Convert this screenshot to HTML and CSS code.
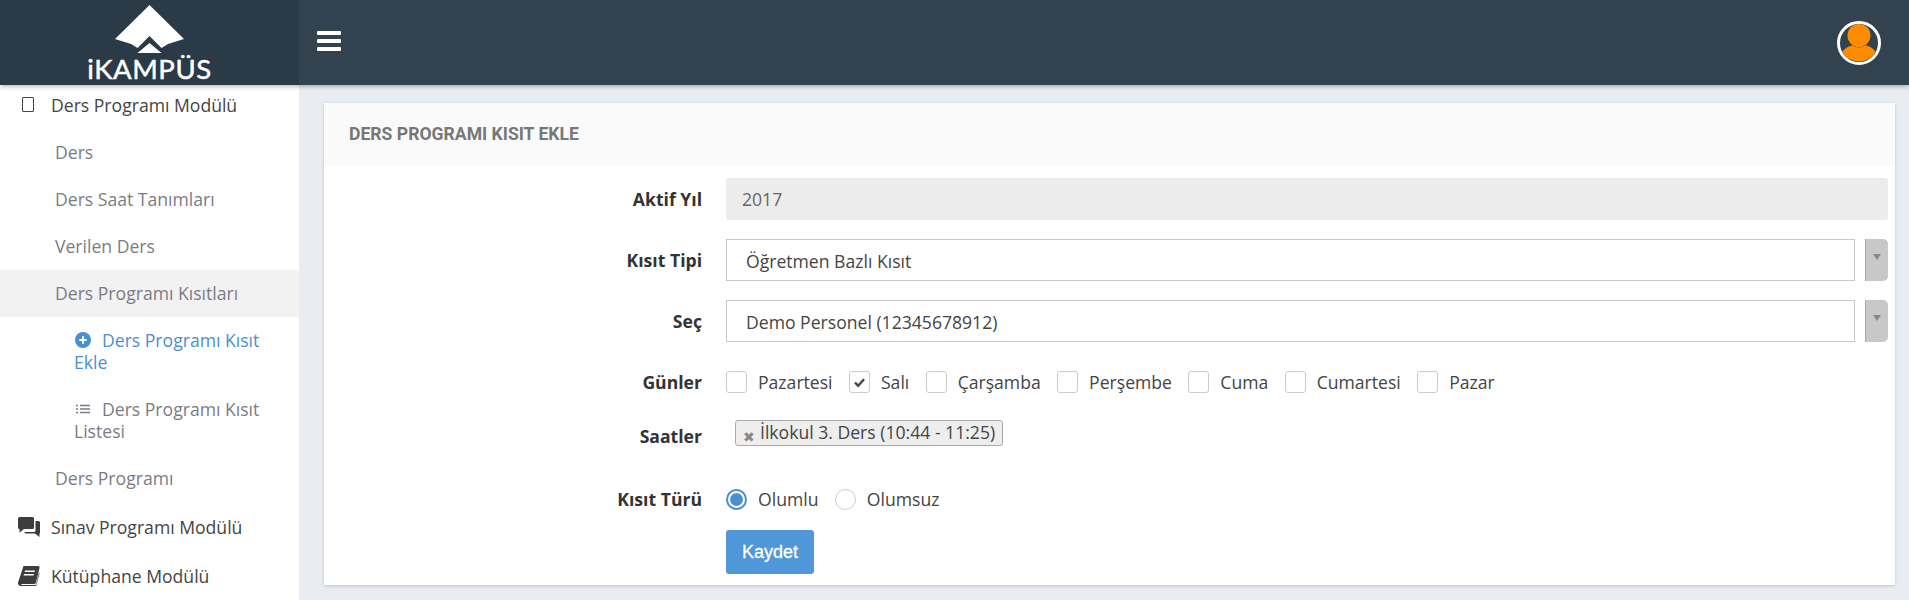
FILE: index.html
```html
<!DOCTYPE html>
<html lang="tr">
<head>
<meta charset="utf-8">
<title>Ders Programı Kısıt Ekle</title>
<link rel="stylesheet" href="styles.css">
</head>
<body>
<div class="app">
  <header class="topbar">
    <div class="brand">
      <svg class="brand-mark" viewBox="0 0 70 50" width="70" height="50">
        <path fill="#fff" d="M34.5 0 69 34 53 39 46.500 43 34.500 31 22.500 43 16 39 0 34Z"/>
        <path fill="#fff" d="M22.500 48 34.500 38 46.500 48Z"/>
      </svg>
      <span class="brand-name">iKAMPÜS</span>
    </div>
    <div class="bar">
      <button class="burger" type="button" aria-label="Menü"><i></i><i></i><i></i></button>
      <svg class="avatar" viewBox="0 0 46 46" width="46" height="46">
        <circle cx="23" cy="23" r="20.500" fill="#33424f" stroke="#fff" stroke-width="3"/>
        <circle cx="23" cy="15.500" r="11.500" fill="#ff8c00"/>
        <path fill="#ff8c00" d="M6.500 32C9 27 15 25.500 17 25.500 20 28 26 28 29 25.500 31 25.500 37 27 39.500 32 36 38 30 41.500 23 41.500 16 41.500 10 38 6.500 32Z"/>
      </svg>
    </div>
  </header>
  <div class="body">
    <nav class="sidebar">
      <ul class="nav">
        <li class="nav-top">
          <span class="nav-icon"><span class="tofu"></span></span>Ders Programı Modülü
        </li>
        <li class="nav-sub">Ders</li>
        <li class="nav-sub">Ders Saat Tanımları</li>
        <li class="nav-sub">Verilen Ders</li>
        <li class="nav-sub is-open">Ders Programı Kısıtları</li>
        <li class="nav-leaf is-active">
          <svg class="leaf-icon" viewBox="0 0 16 16" width="16" height="16"><circle cx="8" cy="8" r="8" fill="#4a8fd1"/><path d="M8 4.300v7.400M4.300 8h7.400" stroke="#fff" stroke-width="2"/></svg>Ders Programı Kısıt Ekle
        </li>
        <li class="nav-leaf">
          <svg class="leaf-icon" viewBox="0 0 16 16" width="16" height="16"><path d="M1 4.500h2M1 8h2M1 11.500h2M5 4.500h10M5 8h10M5 11.500h10" stroke="#7b7b86" stroke-width="1.400"/></svg>Ders Programı Kısıt Listesi
        </li>
        <li class="nav-sub">Ders Programı</li>
        <li class="nav-top">
          <span class="nav-icon">
            <svg viewBox="0 0 22 20" width="22" height="20"><path fill="#3d3d3d" d="M1.500 0h13A1.500 1.500 0 0 1 16 1.500v9a1.500 1.500 0 0 1-1.500 1.500H6l-4.500 3.500V12A1.500 1.500 0 0 1 0 10.500v-9A1.500 1.500 0 0 1 1.500 0Z"/><path fill="#3d3d3d" d="M17.500 4h3A1.500 1.500 0 0 1 22 5.500V15.500a1 1 0 0 1-.5 1V20L17 16.500H7.500L6 15h10a1.500 1.500 0 0 0 1.500-1.500Z"/></svg>
          </span>Sınav Programı Modülü
        </li>
        <li class="nav-top">
          <span class="nav-icon">
            <svg viewBox="0 0 22 20" width="22" height="20"><path fill="#3d3d3d" d="M5.500 0H20a1.500 1.500 0 0 1 1.500 2L18 16.500a2 2 0 0 1-2 1.500H3.500a1 1 0 0 0 0 1H18l3-12.500.5 1-3 11.500a1 1 0 0 1-1 1H3a3 3 0 0 1-3-3.500Z"/><path fill="#fff" d="M7 4.500h10l-.4 1.500h-10ZM6 8h10l-.4 1.500h-10Z"/></svg>
          </span>Kütüphane Modülü
        </li>
      </ul>
    </nav>
    <main class="content">
      <section class="card">
        <h1 class="card-title">DERS PROGRAMI KISIT EKLE</h1>
        <form class="form">
          <div class="row row-year">
            <label class="label">Aktif Yıl</label>
            <div class="static">2017</div>
          </div>
          <div class="row row-select">
            <label class="label">Kısıt Tipi</label>
            <div class="select"><span class="select-value">Öğretmen Bazlı Kısıt</span></div>
            <span class="select-arrow"></span>
          </div>
          <div class="row row-select">
            <label class="label">Seç</label>
            <div class="select"><span class="select-value">Demo Personel (12345678912)</span></div>
            <span class="select-arrow"></span>
          </div>
          <div class="row row-days">
            <label class="label">Günler</label>
            <div class="opts">
              <span class="opt"><span class="box"></span>Pazartesi</span>
              <span class="opt"><span class="box">
                <svg viewBox="0 0 14 12" width="13" height="11"><path d="M2 6l3.500 3.500L12 2.500" fill="none" stroke="#444" stroke-width="2.600"/></svg>
              </span>Salı</span>
              <span class="opt"><span class="box"></span>Çarşamba</span>
              <span class="opt"><span class="box"></span>Perşembe</span>
              <span class="opt"><span class="box"></span>Cuma</span>
              <span class="opt"><span class="box"></span>Cumartesi</span>
              <span class="opt"><span class="box"></span>Pazar</span>
            </div>
          </div>
          <div class="row row-hours">
            <label class="label">Saatler</label>
            <div class="chips">
              <span class="chip"><span class="chip-x">✖</span>İlkokul 3. Ders (10:44 - 11:25)</span>
            </div>
          </div>
          <div class="row row-types">
            <label class="label">Kısıt Türü</label>
            <div class="opts">
              <span class="opt"><span class="box radio is-on"></span>Olumlu</span>
              <span class="opt"><span class="box radio"></span>Olumsuz</span>
            </div>
          </div>
          <div class="row row-submit">
            <span class="label"></span>
            <button class="btn" type="button">Kaydet</button>
          </div>
        </form>
      </section>
    </main>
  </div>
</div>
</body>
</html>
```
FILE: styles.css
```css
* { box-sizing: border-box; }
html, body { margin: 0; height: 100%; overflow: hidden; }
body {
  font-family: "Open Sans", "Liberation Sans", sans-serif;
  font-size: 17.600px;
  line-height: 22px;
  color: #3f3f3f;
  background: #e9edf1;
}
.app { display: flex; flex-direction: column; height: 600px; }

.topbar {
  display: flex;
  height: 85px;
  flex: none;
  position: relative;
  z-index: 2;
  box-shadow: 0 1px 5px rgba(0, 0, 0, .35);
}
.brand {
  width: 299px;
  flex: none;
  background: #2b3a47;
  display: flex;
  flex-direction: column;
  align-items: center;
  padding-top: 5px;
  overflow: hidden;
}
.brand-mark { display: block; flex: none; }
.brand-name {
  font-family: "Lato", "Open Sans", sans-serif;
  font-size: 27.500px;
  line-height: 24px;
  letter-spacing: .6px;
  font-weight: 400;
  -webkit-text-stroke: .5px #fff;
  color: #fff;
  margin-top: 2px;
}
.bar {
  flex: 1;
  background: #33424f;
  display: flex;
  align-items: center;
  justify-content: space-between;
  padding: 0 27px 0 18px;
}
.burger {
  border: 0;
  padding: 0;
  background: none;
  width: 24px;
  display: flex;
  flex-direction: column;
  gap: 4px;
  margin-top: -4px;
}
.burger i { display: block; height: 4px; background: #fff; border-radius: 1px; }
.avatar { display: block; }

.body { display: flex; flex: 1; min-height: 0; }

.sidebar {
  width: 299px;
  flex: none;
  background: #fff;
  overflow: hidden;
}
.nav { list-style: none; margin: -5px 0 0; padding: 0; }
.nav-top {
  display: flex;
  align-items: center;
  height: 49px;
  padding-left: 18px;
  color: #444;
}
.nav-icon {
  width: 33px;
  flex: none;
  display: flex;
  align-items: center;
}
.nav-icon svg { display: block; }
.tofu {
  display: block;
  width: 12px;
  height: 15px;
  margin-left: 4px;
  border: 1px solid #444;
  border-radius: 1px;
}
.nav-sub {
  height: 47px;
  padding: 11.500px 0 0 55px;
  color: #7b7b86;
}
.nav-sub.is-open { background: #f2f2f2; }
.nav-leaf {
  padding: 11.500px 30px 13.500px 74px;
  color: #7b7b86;
}
.nav-leaf.is-active { color: #4a8fd1; }
.leaf-icon {
  display: inline-block;
  vertical-align: -1px;
  margin: 0 11px 0 1px;
}

.content { flex: 1; min-width: 0; padding: 18px 14px 0 25px; }
.card {
  background: #fff;
  box-shadow: 0 1px 3px rgba(0, 0, 0, .18);
  height: 482px;
}
.card-title {
  margin: 0;
  height: 62px;
  padding: 20px 0 0 25px;
  background: #fafafa;
  font-family: "Roboto", "Liberation Sans", sans-serif;
  font-size: 17.600px;
  line-height: 22px;
  font-weight: 700;
  color: #777;
}
.form { padding: 13px 7px 0 0; }
.row { display: flex; align-items: center; }
.label {
  width: 378px;
  margin-right: 24px;
  flex: none;
  text-align: right;
  font-weight: 700;
  color: #333;
}
.static {
  flex: 1;
  height: 42px;
  padding: 10px 16px;
  background: #ececec;
  border-radius: 3px;
  color: #666;
}
.row-select { margin-top: 19px; }
.select {
  flex: 1;
  height: 42px;
  padding: 10px 19px;
  background: #fff;
  border: 1px solid #c8c8c8;
  color: #444;
}
.select-arrow {
  position: relative;
  flex: none;
  width: 23px;
  height: 42px;
  margin-left: 10px;
  background: #c8c8c8;
  border-left: 1px solid #aaa;
  border-radius: 0 5px 5px 0;
}
.select-arrow::after {
  content: "";
  position: absolute;
  left: 7px;
  top: 15px;
  border: 4px solid transparent;
  border-top: 6px solid #888;
}
.opts { display: flex; gap: 16.400px; color: #444; }
.opt { display: flex; align-items: center; gap: 11px; }
.box {
  width: 21px;
  height: 22px;
  border: 1px solid #ccc;
  border-radius: 3px;
  display: flex;
  align-items: center;
  justify-content: center;
  background: #fff;
}
.box svg { display: block; }
.radio { height: 21px; border-radius: 50%; position: relative; }
.radio.is-on { border-color: #4a8fd1; border-width: 2px; }
.radio.is-on::after {
  content: "";
  width: 13px;
  height: 13px;
  border-radius: 50%;
  background: #4a8fd1;
}
.row-days { margin-top: 29px; }
.row-hours { margin-top: 27px; align-items: flex-start; }
.row-hours .label { padding-top: 5px; }
.chips { padding-left: 9px; }
.chip {
  display: flex;
  align-items: center;
  height: 26px;
  padding: 0 7px 2px 7px;
  background: #eeeeee;
  border: 1px solid #aaa;
  border-radius: 3px;
  color: #444;
}
.chip-x {
  font-size: 13.500px;
  line-height: 10px;
  color: #888;
  margin: 10px 5px 0 0;
}
.row-types { margin-top: 41px; }
.row-submit { margin-top: 20px; }
.btn {
  width: 88px;
  height: 44px;
  border: 0;
  border-radius: 3px;
  background: #4f97d8;
  color: #fff;
  font-family: "Liberation Sans", Arial, sans-serif;
  font-size: 18px;
  -webkit-text-stroke: .3px #fff;
}
```
